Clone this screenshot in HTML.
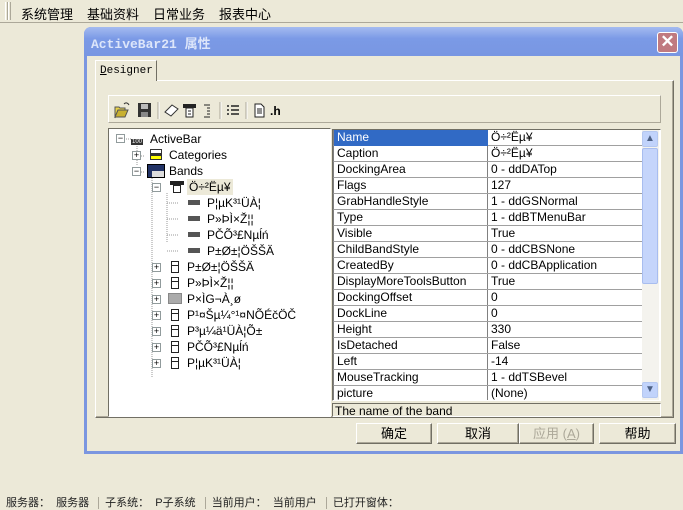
<!DOCTYPE html>
<html><head><meta charset="utf-8"><style>
*{margin:0;padding:0;box-sizing:border-box}
body{width:683px;height:509px;background:#ece9d8;font-family:"Liberation Sans","Noto Sans CJK SC",sans-serif;font-size:12px;color:#000;position:relative;overflow:hidden}
.a{position:absolute}
.menu span{margin-right:14px}
.row{position:absolute;left:0;height:16px;line-height:15px;border-bottom:1px solid #a0a0a0;border-left:1px solid #808080;white-space:nowrap}
.btn{position:absolute;top:423px;height:21px;background:#ece9d8;border:1px solid;border-color:#fff #716f64 #716f64 #fff;box-shadow:inset -1px -1px 0 #aca899;text-align:center;line-height:19px;font-size:13px}
.ti{position:absolute;height:16px;line-height:16px;white-space:nowrap;font-size:12px}
.pm{position:absolute;width:9px;height:9px;border:1px solid #919b9c;background:#fff;font-size:9px;line-height:7px;text-align:center;color:#000}
</style></head><body>
<div class="a" style="left:0;top:0;width:683px;height:23px;border-bottom:1px solid #aca899"></div>
<div class="a" style="left:5px;top:2px;width:3px;height:18px;border-left:1px solid #fff;border-right:1px solid #aca899"></div>
<div class="a" style="left:8px;top:2px;width:3px;height:18px;border-left:1px solid #fff;border-right:1px solid #aca899"></div>
<div class="a menu" style="left:21px;top:4px;font-size:13px"><span>系统管理</span><span>基础资料</span><span>日常业务</span><span>报表中心</span></div>

<div class="a" style="left:84px;top:27px;width:599px;height:427px;background:#7b96e0;border-radius:7px 7px 0 0"></div>
<div class="a" style="left:84px;top:27px;width:599px;height:29px;border-radius:7px 7px 0 0;background:linear-gradient(#a5bbf0,#7b9ae6 40%,#7896e2)"></div>
<div class="a" style="left:91px;top:33px;color:#dde6fa;font-family:'Liberation Mono','Noto Sans CJK SC',monospace;font-weight:bold;font-size:13px">ActiveBar21 属性</div>
<div class="a" style="left:657px;top:32px;width:21px;height:21px;border:1px solid #fff;border-radius:3px;background:#c07a80;color:#fff;font-size:17px;line-height:18px;text-align:center;font-weight:bold">✕</div>
<div class="a" style="left:87px;top:56px;width:593px;height:395px;background:#ece9d8"></div>

<div class="a" style="left:95px;top:80px;width:579px;height:338px;border:1px solid;border-color:#fff #716f64 #716f64 #fff;box-shadow:inset -1px -1px 0 #aca899"></div>
<div class="a" style="left:95px;top:60px;width:62px;height:21px;background:#ece9d8;border:1px solid;border-bottom:none;border-color:#fff #716f64 #716f64 #fff;font-family:'Liberation Mono',monospace;font-size:11px;padding:4px 0 0 4px"><u>D</u>esigner</div>

<div class="a" style="left:108px;top:95px;width:553px;height:28px;border:1px solid;border-color:#fff #aca899 #aca899 #fff"></div>
<svg class="a" style="left:112px;top:100px" width="210" height="20">
<path d="M3 7h4l1 1h5v2H6l-3 8z" fill="#e8d24a" stroke="#555" stroke-width="1"/><path d="M3 17l3-7h10l-3 7z" fill="#c8b030" stroke="#555"/><path d="M12 4c2-2 4-1 5 1" stroke="#333" fill="none"/>
<rect x="26" y="3" width="13" height="14" fill="#333"/><rect x="29" y="4" width="7" height="5" fill="#bbb"/><rect x="29" y="12" width="7" height="5" fill="#888"/>
<line x1="46" y1="2" x2="46" y2="19" stroke="#aca899"/><line x1="47" y1="2" x2="47" y2="19" stroke="#fff"/>
<path d="M53 12l7-7 6 4-7 7z" fill="#fff" stroke="#333"/>
<rect x="71" y="4" width="13" height="4" fill="#222"/><rect x="74" y="8" width="7" height="9" fill="#fff" stroke="#222"/><line x1="76" y1="11" x2="79" y2="11" stroke="#222"/><line x1="76" y1="14" x2="79" y2="14" stroke="#222"/>
<path d="M92 5h6M95 8h3M95 11h3M95 14h3M92 17h6" stroke="#222"/>
<line x1="108" y1="2" x2="108" y2="19" stroke="#aca899"/><line x1="109" y1="2" x2="109" y2="19" stroke="#fff"/>
<path d="M115 6h2M119 6h8M115 10h2M119 10h8M115 14h2M119 14h8" stroke="#222" stroke-width="1.5"/>
<line x1="134" y1="2" x2="134" y2="19" stroke="#aca899"/><line x1="135" y1="2" x2="135" y2="19" stroke="#fff"/>
<path d="M143 4h6l3 3v10h-9z" fill="#fff" stroke="#222"/><path d="M145 9h5M145 11h5M145 13h5" stroke="#222"/>
<text x="158" y="15" font-family="Liberation Sans" font-weight="bold" font-size="12">.h</text>
</svg>

<div class="a" style="left:108px;top:128px;width:223px;height:289px;background:#fff;border:1px solid;border-color:#716f64 #fff #fff #716f64;overflow:hidden">
<svg class="a" style="left:0;top:0" width="223" height="289">
<g stroke="#999" stroke-dasharray="1 1" fill="none">
<path d="M13 10h10M28 15v22M28 27h8M28 43h8M43 49v200M43 58h8M58 64v50M58 74h12M58 90h12M58 106h12M58 122h12M43 138h8M43 154h8M43 170h8M43 186h8M43 202h8M43 218h8M43 234h8"/>
</g>
</svg>
</div>
<div class="pm" style="left:116px;top:134px">−</div>
<div class="ti" style="left:131px;top:131px"><span style="background:#333;color:#fff;font-size:6px;padding:0 1px">100</span></div>
<div class="ti" style="left:150px;top:131px">ActiveBar</div>
<div class="pm" style="left:132px;top:151px">+</div>
<div class="a" style="left:150px;top:149px;width:12px;height:11px;background:#ff0;border:1px solid #333;box-shadow:inset 0 3px 0 #fff,inset 0 6px 0 #333"></div>
<div class="ti" style="left:169px;top:147px">Categories</div>
<div class="pm" style="left:132px;top:167px">−</div>
<div class="a" style="left:147px;top:164px;width:18px;height:14px;background:#223366;border:1px solid #000"></div>
<div class="a" style="left:152px;top:171px;width:12px;height:6px;background:#ddd"></div>
<div class="ti" style="left:169px;top:163px">Bands</div>
<div class="pm" style="left:152px;top:183px">−</div>
<div class="a" style="left:170px;top:181px;width:14px;height:4px;background:#222"></div>
<div class="a" style="left:173px;top:185px;width:8px;height:8px;border:1px solid #222;background:#fff"></div>
<div class="ti" style="left:187px;top:179px;background:#ece9d8;padding:0 2px">Ö÷²Ëµ¥</div>
<div class="a" style="left:188px;top:200px;width:12px;height:5px;background:#555"></div><div class="ti" style="left:207px;top:195px">P¦µK³¹ÜÀ¦</div>
<div class="a" style="left:188px;top:216px;width:12px;height:5px;background:#555"></div><div class="ti" style="left:207px;top:211px">P»ÞÌ×Ž¦¦</div>
<div class="a" style="left:188px;top:232px;width:12px;height:5px;background:#555"></div><div class="ti" style="left:207px;top:227px">PČÕ³£Nµĺń</div>
<div class="a" style="left:188px;top:248px;width:12px;height:5px;background:#555"></div><div class="ti" style="left:207px;top:243px">P±Ø±¦ÖŠŠÄ</div>
<div class="pm" style="left:152px;top:263px">+</div><div class="a" style="left:171px;top:261px;width:8px;height:12px;border:1px solid #222;box-shadow:inset 0 3px 0 #fff,inset 0 4px 0 #222"></div><div class="ti" style="left:187px;top:259px">P±Ø±¦ÖŠŠÄ</div>
<div class="pm" style="left:152px;top:279px">+</div><div class="a" style="left:171px;top:277px;width:8px;height:12px;border:1px solid #222;box-shadow:inset 0 3px 0 #fff,inset 0 4px 0 #222"></div><div class="ti" style="left:187px;top:275px">P»ÞÌ×Ž¦¦</div>
<div class="pm" style="left:152px;top:295px">+</div><div class="a" style="left:168px;top:293px;width:14px;height:11px;background:#aaa;border:1px solid #888"></div><div class="ti" style="left:187px;top:291px">P×ÌG¬À¸ø</div>
<div class="pm" style="left:152px;top:311px">+</div><div class="a" style="left:171px;top:309px;width:8px;height:12px;border:1px solid #222;box-shadow:inset 0 3px 0 #fff,inset 0 4px 0 #222"></div><div class="ti" style="left:187px;top:307px">P¹¤Šµ¼°¹¤NÕÉčÖČ</div>
<div class="pm" style="left:152px;top:327px">+</div><div class="a" style="left:171px;top:325px;width:8px;height:12px;border:1px solid #222;box-shadow:inset 0 3px 0 #fff,inset 0 4px 0 #222"></div><div class="ti" style="left:187px;top:323px">P³µ¼ä¹ÜÀ¦Õ±</div>
<div class="pm" style="left:152px;top:343px">+</div><div class="a" style="left:171px;top:341px;width:8px;height:12px;border:1px solid #222;box-shadow:inset 0 3px 0 #fff,inset 0 4px 0 #222"></div><div class="ti" style="left:187px;top:339px">PČÕ³£Nµĺń</div>
<div class="pm" style="left:152px;top:359px">+</div><div class="a" style="left:171px;top:357px;width:8px;height:12px;border:1px solid #222;box-shadow:inset 0 3px 0 #fff,inset 0 4px 0 #222"></div><div class="ti" style="left:187px;top:355px">P¦µK³¹ÜÀ¦</div>

<div class="a" style="left:332px;top:129px;width:329px;height:272px;background:#fff;border:1px solid;border-color:#716f64 #fff #fff #716f64;overflow:hidden">
<div class="a" style="left:0;top:0;width:309px;height:272px">
<div class="a" style="left:154px;top:0;width:1px;height:272px;background:#808080"></div>
<div class="row" style="top:0;width:309px"><span class="a" style="left:0;width:154px;height:16px;background:#316ac5;color:#fff;padding-left:3px">Name</span><span class="a" style="left:157px">Ö÷²Ëµ¥</span></div>
<div class="row" style="top:16px;width:309px"><span class="a" style="left:3px">Caption</span><span class="a" style="left:157px">Ö÷²Ëµ¥</span></div>
<div class="row" style="top:32px;width:309px"><span class="a" style="left:3px">DockingArea</span><span class="a" style="left:157px">0 - ddDATop</span></div>
<div class="row" style="top:48px;width:309px"><span class="a" style="left:3px">Flags</span><span class="a" style="left:157px">127</span></div>
<div class="row" style="top:64px;width:309px"><span class="a" style="left:3px">GrabHandleStyle</span><span class="a" style="left:157px">1 - ddGSNormal</span></div>
<div class="row" style="top:80px;width:309px"><span class="a" style="left:3px">Type</span><span class="a" style="left:157px">1 - ddBTMenuBar</span></div>
<div class="row" style="top:96px;width:309px"><span class="a" style="left:3px">Visible</span><span class="a" style="left:157px">True</span></div>
<div class="row" style="top:112px;width:309px"><span class="a" style="left:3px">ChildBandStyle</span><span class="a" style="left:157px">0 - ddCBSNone</span></div>
<div class="row" style="top:128px;width:309px"><span class="a" style="left:3px">CreatedBy</span><span class="a" style="left:157px">0 - ddCBApplication</span></div>
<div class="row" style="top:144px;width:309px"><span class="a" style="left:3px">DisplayMoreToolsButton</span><span class="a" style="left:157px">True</span></div>
<div class="row" style="top:160px;width:309px"><span class="a" style="left:3px">DockingOffset</span><span class="a" style="left:157px">0</span></div>
<div class="row" style="top:176px;width:309px"><span class="a" style="left:3px">DockLine</span><span class="a" style="left:157px">0</span></div>
<div class="row" style="top:192px;width:309px"><span class="a" style="left:3px">Height</span><span class="a" style="left:157px">330</span></div>
<div class="row" style="top:208px;width:309px"><span class="a" style="left:3px">IsDetached</span><span class="a" style="left:157px">False</span></div>
<div class="row" style="top:224px;width:309px"><span class="a" style="left:3px">Left</span><span class="a" style="left:157px">-14</span></div>
<div class="row" style="top:240px;width:309px"><span class="a" style="left:3px">MouseTracking</span><span class="a" style="left:157px">1 - ddTSBevel</span></div>
<div class="row" style="top:256px;width:309px"><span class="a" style="left:3px">picture</span><span class="a" style="left:157px">(None)</span></div>
</div>
<div class="a" style="left:309px;top:0;width:17px;height:270px;background:#f4f3ee"></div>
<div class="a" style="left:309px;top:1px;width:16px;height:16px;background:#c1d3fb;border:1px solid #b5c8f0;border-radius:2px;color:#4d6185;font-size:10px;text-align:center;line-height:14px">▲</div>
<div class="a" style="left:309px;top:18px;width:16px;height:136px;background:#c5d5fb;border:1px solid #a8bdef;border-radius:2px"></div>
<div class="a" style="left:309px;top:252px;width:16px;height:16px;background:#c1d3fb;border:1px solid #b5c8f0;border-radius:2px;color:#4d6185;font-size:10px;text-align:center;line-height:14px">▼</div>
</div>
<div class="a" style="left:332px;top:403px;width:329px;height:14px;border:1px solid;border-color:#716f64 #fff #fff #716f64;overflow:hidden;line-height:14px;padding-left:2px">The name of the band</div>

<div class="btn" style="left:356px;width:76px">确定</div>
<div class="btn" style="left:437px;width:82px">取消</div>
<div class="btn" style="left:519px;width:75px;color:#aca899">应用 (<u>A</u>)</div>
<div class="btn" style="left:599px;width:77px">帮助</div>

<div class="a" style="left:6px;top:494px;font-size:11px;color:#222;white-space:nowrap">服务器：&nbsp; 服务器 <span style="border-left:1px solid #aca899;margin:0 6px"></span> 子系统：&nbsp; P子系统 <span style="border-left:1px solid #aca899;margin:0 6px"></span> 当前用户：&nbsp; 当前用户 <span style="border-left:1px solid #aca899;margin:0 6px"></span> 已打开窗体：</div>
</body></html>
